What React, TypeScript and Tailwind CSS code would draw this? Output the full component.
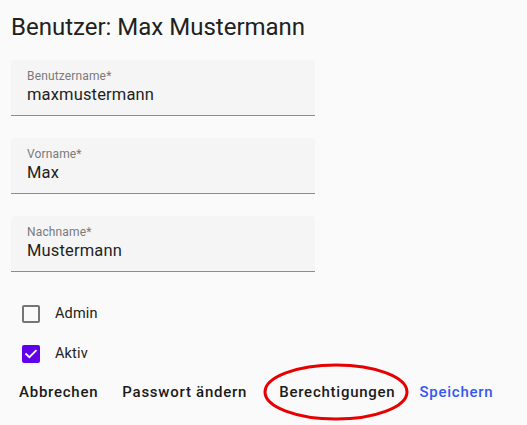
import { useState } from "react";

type Field = {
    label: string;
    value: string;
}

const fields: Field[] = [
    { label: "Benutzername*", value: "maxmustermann" },
    { label: "Vorname*", value: "Max" },
    { label: "Nachname*", value: "Mustermann" },
];

function CheckRow({ label, checked, onToggle }: { label: string; checked: boolean; onToggle: () => void }) {
    return (
        <label className="flex items-center h-[40px] cursor-pointer select-none" onClick={onToggle}>
            <span className="w-[18px] h-[18px] ml-[11px] flex items-center justify-center">
                {checked ? (
                    <span className="w-[18px] h-[18px] rounded-[2px] bg-[#6200ea] flex items-center justify-center">
                        <svg width="14" height="14" viewBox="0 0 14 14" fill="none">
                            <path d="M2.2 7.2 L5.4 10.2 L11.8 3.8" stroke="white" strokeWidth="1.9" strokeLinecap="square" />
                        </svg>
                    </span>
                ) : (
                    <span className="w-[18px] h-[18px] rounded-[2px] border-2 border-[#757575]" />
                )}
            </span>
            <span className="ml-[15px] text-[14.5px] text-[#212121] tracking-[0.15px]">{label}</span>
        </label>
    );
}

export default function App() {
    const [admin, setAdmin] = useState(false);
    const [active, setActive] = useState(true);

    return (
        <section className="w-[527px] h-[425px] bg-[#fafafa] px-[11px] font-['Roboto',sans-serif] overflow-hidden">
            <h1 className="pt-[11px] text-[24px] leading-[32px] text-[#212121]">Benutzer: Max Mustermann</h1>
            <div className="flex flex-col gap-[22px] mt-[17px] w-[304px]">
                {
                    fields.map((field) => (
                        <div key={field.label} className="h-[56px] bg-[#f5f5f5] rounded-t-[4px] border-b border-[#8c8c8c] px-[16px] pt-[9px]">
                            <p className="text-[12px] leading-[14px] text-[#7a7a7a] tracking-[0.15px]">{field.label}</p>
                            <p className="text-[16.5px] leading-[24px] text-[#1f1f1f] tracking-[0.15px]">{field.value}</p>
                        </div>
                    ))
                }
            </div>
            <div className="mt-[22px] flex flex-col">
                <CheckRow label="Admin" checked={admin} onToggle={() => setAdmin(!admin)} />
                <CheckRow label="Aktiv" checked={active} onToggle={() => setActive(!active)} />
            </div>
            <div className="flex items-center h-[36px] text-[15px] font-medium tracking-[0.75px]">
                <button className="ml-[8px] text-[#1a1a1a]">Abbrechen</button>
                <button className="ml-[24px] text-[#1a1a1a]">Passwort ändern</button>
                <div className="relative ml-[32px]">
                    <button className="text-[#1a1a1a]">Berechtigungen</button>
                    <svg className="absolute left-[-16px] top-[-18px] pointer-events-none" width="146" height="58" viewBox="0 0 146 58" fill="none">
                        <ellipse cx="73" cy="29" rx="71" ry="27" stroke="#e60000" strokeWidth="3" />
                    </svg>
                </div>
                <button className="ml-[24px] text-[#3558f5]">Speichern</button>
            </div>
        </section>
    );
}
